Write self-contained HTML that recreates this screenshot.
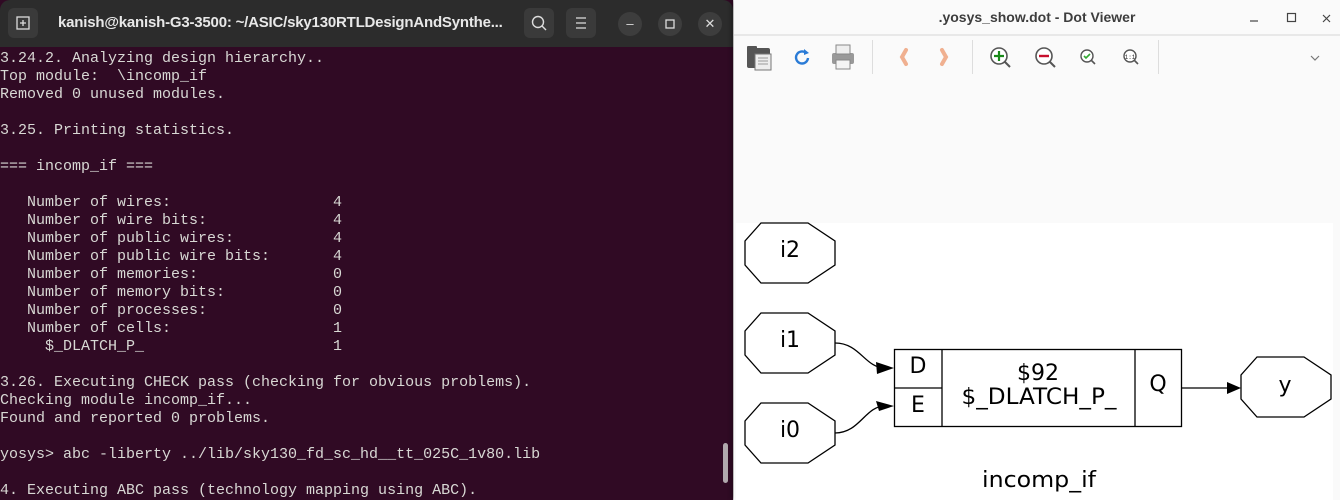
<!DOCTYPE html>
<html><head><meta charset="utf-8">
<style>
html,body{margin:0;padding:0;width:1340px;height:500px;overflow:hidden;background:#f0f0f0;font-family:"Liberation Sans",sans-serif}
#term{position:absolute;left:0;top:0;width:733px;height:500px;background:#300a24;overflow:hidden}
#tbar{position:absolute;left:0;top:0;width:733px;height:47px;background:#2c2c2c;border-radius:10px 10px 0 0}
.tbtn{position:absolute;top:8px;width:30px;height:30px;background:#3a3a3a;border-radius:6px}
.cbtn{position:absolute;top:12px;width:24px;height:24px;background:#3d3d3d;border-radius:50%;color:#ddd;font-size:13px;text-align:center;line-height:24px}
#ttitle{position:absolute;left:58px;top:14px;color:#e8e8e8;font-weight:bold;font-size:15px;letter-spacing:-0.2px}
pre{position:absolute;left:0;top:50px;margin:0;font-family:"Liberation Mono",monospace;font-size:15px;line-height:18px;color:#d8d8d4}
#sb{position:absolute;left:723px;top:443px;width:5px;height:40px;background:#b0a8ad;border-radius:3px}
#dv{position:absolute;left:734px;top:0;width:606px;height:500px;background:#fafafa;box-shadow:-3px 0 4px rgba(0,0,0,.25)}
#dtitle{position:absolute;left:0;width:606px;top:9px;text-align:center;font-weight:bold;font-size:14px;color:#3d3d3d}
#canvas{position:absolute;left:2px;top:223px;width:597px;height:277px;background:#fff}
</style></head><body>
<div id="term">
<div id="tbar">
 <div class="tbtn" style="left:8px"><svg width="30" height="30"><rect x="9" y="9" width="12" height="12" fill="none" stroke="#ddd" stroke-width="1.3"/><path d="M15 12v6M12 15h6" stroke="#ddd" stroke-width="1.3"/></svg></div>
 <div id="ttitle">kanish@kanish-G3-3500: ~/ASIC/sky130RTLDesignAndSynthe...</div>
 <div class="tbtn" style="left:524px"><svg width="30" height="30"><circle cx="14" cy="14" r="5.5" fill="none" stroke="#ddd" stroke-width="1.4"/><path d="M18 18l4 4" stroke="#ddd" stroke-width="1.4"/></svg></div>
 <div class="tbtn" style="left:566px"><svg width="30" height="30"><path d="M10 10h10M10 15h10M10 20h10" stroke="#ddd" stroke-width="1.3"/></svg></div>
 <div class="cbtn" style="left:618px">&#8211;</div>
 <div class="cbtn" style="left:658px"><svg width="24" height="24"><rect x="8" y="8" width="8" height="8" fill="none" stroke="#ddd" stroke-width="1.3"/></svg></div>
 <div class="cbtn" style="left:698px">&#x2715;</div>
</div>
<pre>3.24.2. Analyzing design hierarchy..
Top module:  \incomp_if
Removed 0 unused modules.

3.25. Printing statistics.

=== incomp_if ===

   Number of wires:                  4
   Number of wire bits:              4
   Number of public wires:           4
   Number of public wire bits:       4
   Number of memories:               0
   Number of memory bits:            0
   Number of processes:              0
   Number of cells:                  1
     $_DLATCH_P_                     1

3.26. Executing CHECK pass (checking for obvious problems).
Checking module incomp_if...
Found and reported 0 problems.

yosys> abc -liberty ../lib/sky130_fd_sc_hd__tt_025C_1v80.lib

4. Executing ABC pass (technology mapping using ABC).</pre>
<div id="sb"></div>
</div>
<div id="dv">
 <div id="dtitle">.yosys_show.dot - Dot Viewer</div>
 <svg style="position:absolute;left:0;top:0" width="606" height="100">
  <line x1="0" y1="35" x2="606" y2="35" stroke="#d6d6d6"/>
  <path d="M516 21h8" stroke="#444" stroke-width="1.2"/>
  <rect x="553.5" y="13.5" width="8" height="8" fill="none" stroke="#444" stroke-width="1.2"/>
  <path d="M589 15l7 7M596 15l-7 7" stroke="#444" stroke-width="1.2"/>
  <rect x="13" y="48" width="23" height="20" rx="2" fill="#555"/><rect x="13" y="46" width="10" height="5" rx="1" fill="#555"/>
  <rect x="21" y="54" width="16" height="16" fill="#eee" stroke="#777"/>
  <path d="M24 58h10M24 61h10M24 64h10" stroke="#999"/>
  <path d="M72 53a6 6 0 1 0 2 5" fill="none" stroke="#2a7bd6" stroke-width="2.4"/><path d="M70 49l5 4-5 2z" fill="#2a7bd6"/>
  <rect x="98" y="53" width="22" height="11" rx="2" fill="#999"/><rect x="102" y="45" width="14" height="9" fill="#eee" stroke="#888"/>
  <rect x="102" y="60" width="14" height="9" fill="#f4f4f4" stroke="#888"/>
  <line x1="138.5" y1="40" x2="138.5" y2="74" stroke="#ddd"/>
  <path d="M172 50l-4 7 4 7" fill="none" stroke="#f0b090" stroke-width="4" stroke-linecap="round"/>
  <path d="M208 50l4 7-4 7" fill="none" stroke="#f0b090" stroke-width="4" stroke-linecap="round"/>
  <line x1="238.5" y1="40" x2="238.5" y2="74" stroke="#ddd"/>
  <circle cx="265" cy="56" r="8" fill="#fff" stroke="#555" stroke-width="1.6"/><path d="M271 62l5 5" stroke="#555" stroke-width="2"/><path d="M265 51v10M260 56h10" stroke="#198a19" stroke-width="2.2"/>
  <circle cx="310" cy="56" r="8" fill="#fff" stroke="#555" stroke-width="1.6"/><path d="M316 62l5 5" stroke="#555" stroke-width="2"/><path d="M305 56h10" stroke="#c8102e" stroke-width="2.4"/>
  <circle cx="353" cy="56" r="6" fill="#fff" stroke="#555" stroke-width="1.4"/><path d="M357 60l4 4" stroke="#555" stroke-width="1.6"/><path d="M350 56l2 2 4-4" fill="none" stroke="#3a3" stroke-width="1.6"/>
  <circle cx="396" cy="56" r="6" fill="#fff" stroke="#555" stroke-width="1.4"/><path d="M400 60l4 4" stroke="#555" stroke-width="1.6"/><text x="396" y="59" font-size="6" text-anchor="middle" fill="#333" font-family="Liberation Mono">1:1</text>
  <line x1="424.5" y1="40" x2="424.5" y2="74" stroke="#ddd"/>
  <path d="M577 56l4 4 4-4" fill="none" stroke="#777" stroke-width="1.2"/>
 </svg>
 <div id="canvas"></div>
 <svg style="position:absolute;left:0;top:0" width="606" height="500" font-family="DejaVu Sans,sans-serif" font-size="22">
  <g fill="#fff" stroke="#000" stroke-width="1.3">
   <polygon points="27,223 74,223 101,241 101,265 74,283 27,283 11,265 11,241"/>
   <polygon points="27,313 74,313 101,331 101,355 74,373 27,373 11,355 11,331"/>
   <polygon points="27,403 74,403 101,421 101,445 74,463 27,463 11,445 11,421"/>
   <polygon points="523,357 570,357 597,375 597,399 570,417 523,417 507,399 507,375"/>
   <rect x="160.5" y="349.5" width="287" height="77"/>
   <line x1="208" y1="349.5" x2="208" y2="426.5"/>
   <line x1="401" y1="349.5" x2="401" y2="426.5"/>
   <line x1="160.5" y1="388" x2="208" y2="388"/>
   <path d="M101 343c25 0 30 25 50 25" fill="none"/>
   <path d="M101 433c25 0 30 -27 50 -27" fill="none"/>
   <line x1="447" y1="388" x2="496" y2="388"/>
  </g>
  <polygon points="142,362 160,368 143,374" fill="#000"/>
  <polygon points="142,401 160,406 145,411" fill="#000"/>
  <polygon points="493,382 507,388 493,394" fill="#000"/>
  <g text-anchor="middle" fill="#000">
   <text x="56" y="257">i2</text><text x="56" y="347">i1</text><text x="56" y="437">i0</text>
   <text x="551" y="392">y</text>
   <text x="184" y="373">D</text><text x="184" y="412">E</text>
   <text x="424" y="391">Q</text>
   <text x="304" y="380">$92</text>
   <text x="305" y="404" textLength="155" lengthAdjust="spacingAndGlyphs">$_DLATCH_P_</text>
   <text x="305" y="487" textLength="114" lengthAdjust="spacingAndGlyphs">incomp_if</text>
  </g>
 </svg>
</div>
</body></html>
